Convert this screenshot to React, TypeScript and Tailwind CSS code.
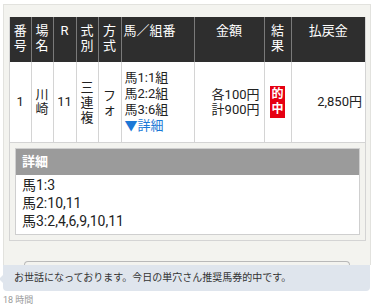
import React from "react";

const font = { fontFamily: '"Roboto", "Noto Sans CJK JP", sans-serif' };

export default function App() {
  return (
    <div className="w-[374px] h-[306px] bg-white overflow-hidden text-[#222]" style={font}>
      {/* panel */}
      <div className="ml-[3px] mt-[4px] w-[368px] border border-b-0 border-[#e2e2de] bg-[#f3f3ef] pt-[12px] pl-[5px] pr-[4px]">
        <div className="border-x border-b border-[#d4d4d4] bg-[#f3f3ef]">
          <table className="w-full table-fixed border-collapse text-[13px]">
            <colgroup>
              <col className="w-[21px]" />
              <col className="w-[22px]" />
              <col className="w-[23px]" />
              <col className="w-[22px]" />
              <col className="w-[23px]" />
              <col className="w-[73px]" />
              <col className="w-[70px]" />
              <col className="w-[27px]" />
              <col className="w-[74px]" />
            </colgroup>
            <thead>
              <tr className="h-[45px] bg-[#2e2e2e] text-white leading-[15px]">
                <th className="align-top pt-[6px] font-normal">番<br />号</th>
                <th className="align-top pt-[6px] font-normal border-l border-[#7a7a7a]">場<br />名</th>
                <th className="align-top pt-[6px] font-normal border-l border-[#7a7a7a]">R</th>
                <th className="align-top pt-[6px] font-normal border-l border-[#7a7a7a]">式<br />別</th>
                <th className="align-top pt-[6px] font-normal border-l border-[#7a7a7a]">方<br />式</th>
                <th className="align-top pt-[6px] pl-[2px] text-left font-normal border-l border-[#7a7a7a]">馬／組番</th>
                <th className="align-top pt-[6px] font-normal border-l border-[#7a7a7a]">金額</th>
                <th className="align-top pt-[6px] font-normal border-l border-[#7a7a7a]">結<br />果</th>
                <th className="align-top pt-[6px] font-normal border-l border-[#7a7a7a]">払戻金</th>
              </tr>
            </thead>
            <tbody>
              <tr className="h-[80px] bg-white border-b border-[#d4d4d4]">
                <td className="text-center align-middle">1</td>
                <td className="text-center align-middle border-l border-[#d4d4d4] leading-[14px]">川<br />崎</td>
                <td className="text-center align-middle border-l border-[#d4d4d4]">11</td>
                <td className="text-center align-middle border-l border-[#d4d4d4] leading-[15px] pt-[2px]">三<br />連<br />複</td>
                <td className="text-center align-middle border-l border-[#d4d4d4] leading-[14px] pt-[2px]">フ<br />ォ</td>
                <td className="align-middle border-l border-[#d4d4d4] pl-[3px] leading-[16px] whitespace-nowrap">
                  馬1:1組<br />馬2:2組<br />馬3:6組<br />
                  <span className="text-[#1b78d6]">▼詳細</span>
                </td>
                <td className="text-right align-middle border-l border-[#d4d4d4] pr-[4px] leading-[15px]">各100円<br />計900円</td>
                <td className="align-middle border-l border-[#d4d4d4]">
                  <div className="mx-auto w-[15px] h-[32px] bg-[#e60012] text-white font-bold text-[12px] leading-[15px] flex flex-col items-center justify-center">
                    <span>的</span>
                    <span>中</span>
                  </div>
                </td>
                <td className="text-right align-middle border-l border-[#d4d4d4] pr-[3px]">2,850円</td>
              </tr>
            </tbody>
          </table>

          {/* detail */}
          <div className="mx-[5px] mt-[5px] mb-[5px] border border-[#cfcfcf]">
            <div className="h-[26px] bg-[#9b9b9b] text-white font-bold text-[13px] leading-[26px] pl-[6px]">詳細</div>
            <div className="bg-white pl-[6px] pt-[1px] pb-[4px] text-[14px] leading-[18px] text-[#222]">
              <div>馬1:3</div>
              <div>馬2:10,11</div>
              <div>馬3:2,4,6,9,10,11</div>
            </div>
          </div>
        </div>
        <div className="h-[20px]" />
        <div className="ml-[15px] mr-[16px] h-[4px] border-t border-x border-[#b9b9b9] rounded-t-[6px]" />
      </div>

      {/* message bubble */}
      <div className="relative ml-[3px] w-[367px] h-[26px] bg-[#dfe5ed] rounded-b-[4px] pl-[11px] text-[10px] leading-[26px] text-[#333]">
        <span className="absolute left-[-4px] top-[9px] w-0 h-0 border-y-[5px] border-y-transparent border-r-[5px] border-r-[#dfe5ed]" />
        お世話になっております。今日の単穴さん推奨馬券的中です。
      </div>
      <div className="ml-[3px] mt-[3px] text-[9px] leading-[12px] text-[#9a9a9a]">18 時間</div>
    </div>
  );
}
